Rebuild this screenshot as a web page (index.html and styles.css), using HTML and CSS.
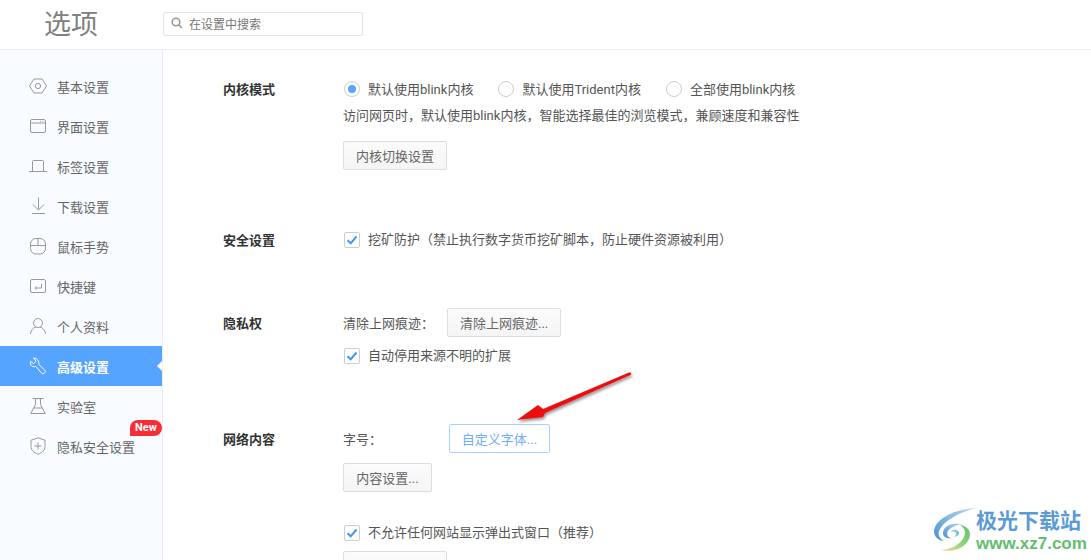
FILE: index.html
```html
<!DOCTYPE html>
<html lang="zh-CN">
<head>
  <meta charset="UTF-8" />
  <title>选项</title>
  <link rel="stylesheet" href="styles.css">
</head>
<body>
<header class="top-bar">
  <h1 class="page-title">选项</h1>
  <div class="search-box">
    <svg class="search-icon" width="12" height="12" viewBox="0 0 12 12"><circle cx="5" cy="5" r="3.8"/><path d="M7.8 7.8 11 11"/></svg>
    <span>在设置中搜索</span>
  </div>
</header>

<div class="page-body">
  <!-- Sidebar -->
  <nav class="side-nav">
    <a class="nav-item"><svg viewBox="0 0 18 18"><path d="M5 2h8l4.500 7-4.500 7H5L.5 9z"/><circle cx="9" cy="9" r="2.600"/></svg>基本设置</a>
    <a class="nav-item"><svg viewBox="0 0 18 18"><rect x="1.500" y="2.500" width="15" height="13" rx="1.500"/><path d="M1.500 6h15M11 4.300h1M13.500 4.300h1"/></svg>界面设置</a>
    <a class="nav-item"><svg viewBox="0 0 18 18"><path d="M0 14.500h18M3.500 14.500V4.500a1 1 0 0 1 1-1h9a1 1 0 0 1 1 1v10"/></svg>标签设置</a>
    <a class="nav-item"><svg viewBox="0 0 18 18"><path d="M9.500 .5v12M3.800 7.500l5.700 5.500L15 7.500M3 16.500h13"/></svg>下载设置</a>
    <a class="nav-item"><svg viewBox="0 0 18 18"><path d="M1.500 7a5.500 5.500 0 0 1 5.500-5.500h4A5.500 5.500 0 0 1 16.500 7v4.500a5.500 5.500 0 0 1-5.500 5.500H7a5.500 5.500 0 0 1-5.500-5.500zM1.500 8.500h15M9 1.500v7"/></svg>鼠标手势</a>
    <a class="nav-item"><svg viewBox="0 0 18 18"><rect x="1.500" y="2.500" width="15" height="13" rx="1.500"/><path d="M12.500 7v4H6M7.500 9.500 6 11l1.500 1.500"/></svg>快捷键</a>
    <a class="nav-item"><svg viewBox="0 0 18 18"><circle cx="9" cy="6" r="4.500"/><path d="M1.500 17c.3-4 3-6.500 5.500-7M16.500 17c-.3-4-3-6.500-5.500-7"/></svg>个人资料</a>
    <a class="nav-item is-active"><svg viewBox="0 0 18 18"><path d="M6.800 1.500 4.500 1 7 4.200 4.700 6.700 1.500 4.300c-.5 2 0 3.700 1.300 4.700 1.300.9 2.800.9 4 .4l5.700 6.600c1 .8 2.300.8 3.200-.1.800-1 .7-2.200-.2-3L9.800 7.500c.5-2.500-.8-5.300-3-6z"/></svg>高级设置</a>
    <a class="nav-item"><svg viewBox="0 0 18 18"><path d="M3.500 1.500h11M6.500 1.500v6L1.800 16.500h14.400L11.500 7.500v-6M4.800 11h8.400"/></svg>实验室</a>
    <a class="nav-item"><svg viewBox="0 0 18 18"><path d="M9 .8 16 3.300v6.200c0 3.700-3 6.300-7 7.700-4-1.400-7-4-7-7.700V3.300zM5.500 9h7M9 5.500v7"/></svg>隐私安全设置<span class="new-badge">New</span></a>
  </nav>

  <!-- Settings -->
  <main class="settings">
    <section class="setting-row setting-row-first">
      <div class="row-label">内核模式</div>
      <div class="row-body">
        <div class="line radio-line">
          <label class="radio-opt"><i class="radio is-on"></i>默认使用blink内核</label>
          <label class="radio-opt"><i class="radio"></i>默认使用Trident内核</label>
          <label class="radio-opt"><i class="radio"></i>全部使用blink内核</label>
        </div>
        <div class="line desc">访问网页时，默认使用blink内核，智能选择最佳的浏览模式，兼顾速度和兼容性</div>
        <div class="btn-line"><button class="btn">内核切换设置</button></div>
      </div>
    </section>

    <section class="setting-row">
      <div class="row-label">安全设置</div>
      <div class="row-body">
        <label class="line"><i class="check"><svg width="14" height="14" viewBox="0 0 14 14"><path d="M2.500 7.200 5.700 10.300 11.500 3.500"/></svg></i>挖矿防护（禁止执行数字货币挖矿脚本，防止硬件资源被利用）</label>
      </div>
    </section>

    <section class="setting-row">
      <div class="row-label row-label-tall">隐私权</div>
      <div class="row-body">
        <div class="inline-line"><span class="inline-name">清除上网痕迹：</span><button class="btn">清除上网痕迹...</button></div>
        <label class="line after-btn"><i class="check"><svg width="14" height="14" viewBox="0 0 14 14"><path d="M2.500 7.200 5.700 10.300 11.500 3.500"/></svg></i>自动停用来源不明的扩展</label>
      </div>
    </section>

    <section class="setting-row">
      <div class="row-label row-label-tall">网络内容</div>
      <div class="row-body">
        <div class="inline-line"><span class="font-name">字号：</span><button class="btn btn-focus">自定义字体...</button></div>
        <div class="btn-line btn-line-near"><button class="btn btn-content">内容设置...</button></div>
        <label class="line popup-line"><i class="check"><svg width="14" height="14" viewBox="0 0 14 14"><path d="M2.500 7.200 5.700 10.300 11.500 3.500"/></svg></i>不允许任何网站显示弹出式窗口（推荐）</label>
        <div class="btn-line btn-line-last"><button class="btn btn-last"></button></div>
      </div>
    </section>
  </main>
</div>

<!-- annotation arrow drawn over the screenshot -->
<svg class="red-arrow" width="140" height="70" viewBox="0 0 140 70">
  <defs>
    <filter id="arrowShadow" x="-20%" y="-40%" width="140%" height="180%"><feDropShadow dx="1" dy="2" stdDeviation="1.600" flood-color="#000" flood-opacity=".45"/></filter>
  </defs>
  <path filter="url(#arrowShadow)" fill="#ec0f0f" d="M5 58 26 43 31 47 117 10.500c2-.5 3 1.500 1.500 2.500L33 51 31 55z"/>
</svg>

<!-- watermark -->
<div class="watermark">
  <svg class="wm-logo" width="44" height="46" viewBox="0 0 44 46">
    <defs>
      <linearGradient id="wmBlue" x1="0" y1="1" x2="1" y2="0"><stop offset="0" stop-color="#4a90d0"/><stop offset="1" stop-color="#bcdcf2"/></linearGradient>
      <linearGradient id="wmGreen" x1="0" y1="1" x2="1" y2="0"><stop offset="0" stop-color="#f0e28a"/><stop offset=".5" stop-color="#8ed27c"/><stop offset="1" stop-color="#5cc46c"/></linearGradient>
    </defs>
    <path fill="url(#wmBlue)" d="M44 1C26 2 8 9 3 20c-3 7 1 13 9 14-5-3-7-7-4-12C13 13 28 5 44 1z"/>
    <path fill="url(#wmBlue)" d="M31 17c-9-2-19 1-20 8-.6 4 3 7 8 6-3-1-4.500-3-3.500-6 1.500-4 8-7 15.500-8z"/>
    <path fill="url(#wmGreen)" d="M9 43c12 3 24-2 28-11 3-7-1-13-9-14 5 3 6 7 4 12-4 8-12 12-23 13z"/>
    <path fill="#7fc3dc" d="M27 25c-2-3-7-3-8 0 1.500-1 4-1 5 1 .6 1.500-.5 3-2 3.500 3 .5 6-2 5-4.500z"/>
  </svg>
  <div class="wm-text">
    <div class="wm-name">极光下载站</div>
    <div class="wm-url">www.xz7.com</div>
  </div>
</div>
</body>
</html>
```

FILE: styles.css
```css
* { box-sizing: border-box; margin: 0; padding: 0; }
html, body { height: 560px; overflow: hidden; }
body {
  background: #fff;
  font-family: Roboto, "Noto Sans CJK SC", sans-serif;
  font-size: 13px;
  color: #555;
}

/* header */
.top-bar {
  height: 50px;
  display: flex;
  align-items: center;
  border-bottom: 1px solid #eee;
}
.page-title {
  width: 163px;
  padding-left: 44px;
  font-size: 27px;
  font-weight: 400;
  line-height: 50px;
  color: #808080;
}
.search-box {
  width: 200px;
  height: 24px;
  margin-top: -1px;
  padding: 0 0 2px 7px;
  display: flex;
  align-items: center;
  gap: 6px;
  border: 1px solid #e3e3e3;
  border-radius: 2px;
  font-size: 12px;
  color: #777;
}
.search-icon { fill: none; stroke: #999; stroke-width: 1.600; }

.page-body { display: flex; height: 510px; }

/* sidebar */
.side-nav {
  width: 163px;
  flex: none;
  padding-top: 16px;
  background: #f8fbff;
  border-right: 1px solid #e8edf6;
}
.nav-item {
  position: relative;
  height: 40px;
  padding-left: 29px;
  display: flex;
  align-items: center;
  gap: 10px;
  color: #666;
}
.nav-item svg {
  width: 18px;
  height: 18px;
  flex: none;
  fill: none;
  stroke: #999;
  stroke-width: 1;
}
.nav-item.is-active {
  background: #55a4ff;
  color: #fff;
  font-weight: 700;
}
.nav-item.is-active svg { stroke: #fff; }
.nav-item.is-active::after {
  content: '';
  position: absolute;
  right: 0;
  top: 15px;
  border: 5px solid transparent;
  border-left: 0;
  border-right-color: #fff;
}
.new-badge {
  position: absolute;
  left: 130px;
  top: -6px;
  width: 32px;
  height: 16px;
  background: #f92e35;
  border-radius: 8px 8px 8px 0;
  color: #fff;
  font-size: 11px;
  font-weight: 700;
  line-height: 16px;
  text-align: center;
}

/* settings */
.settings { flex: 1; padding: 29px 0 0 60px; overflow: hidden; }
.setting-row { display: flex; margin-bottom: 58px; }
.setting-row-first { margin-bottom: 60px; }
.row-label {
  width: 120px;
  flex: none;
  margin-bottom: -1px;
  padding-top: 1px;
  font-weight: 700;
  line-height: 20px;
  color: #333;
}
.row-label-tall { line-height: 30px; }
.row-body { flex: 1; }
.line {
  min-height: 20px;
  display: flex;
  align-items: center;
  gap: 8px;
  line-height: 20px;
}
.radio-line { height: 20px; gap: 24px; }
.radio-opt { display: flex; align-items: center; gap: 8px; padding-top: 2px; }
.radio {
  width: 16px;
  height: 16px;
  margin: 0 0 2px 1px;
  border: 1px solid #ccc;
  border-radius: 50%;
  background: #fff;
  position: relative;
}
.radio.is-on::after {
  content: '';
  position: absolute;
  left: 3px;
  top: 3px;
  width: 8px;
  height: 8px;
  border-radius: 50%;
  background: #55a4ff;
}
.check {
  width: 16px;
  height: 16px;
  margin-left: 1px;
  border: 1px solid #ccc;
  border-radius: 2px;
  display: flex;
  align-items: center;
  justify-content: center;
}
.check svg { fill: none; stroke: #3f96f5; stroke-width: 2; }
.desc { margin-top: 6px; padding-top: 1px; }
.btn-line { margin-top: 15px; display: flex; }
.btn-line-near { margin-top: 10px; }
.btn-line-last { margin-top: 8px; }
.btn {
  height: 29px;
  padding: 0 12px;
  border: 1px solid #ddd;
  border-radius: 2px;
  background: linear-gradient(#fbfbfb, #f5f5f5);
  font: inherit;
  color: #666;
}
.btn-focus {
  width: 101px;
  padding: 0;
  background: #fff;
  border-color: #a9d0ff;
  color: #70aef5;
}
.btn-content { width: 89px; padding: 0; }
.btn-last { width: 104px; padding: 0; }
.inline-line { display: flex; align-items: center; }
.inline-name { width: 104px; }
.font-name { width: 106px; }
.after-btn { margin-top: 9px; }
.popup-line { margin-top: 31px; }

/* overlays */
.red-arrow { position: absolute; left: 512px; top: 362px; }
.watermark {
  position: absolute;
  left: 932px;
  top: 507px;
  display: flex;
}
.wm-text { padding-top: 2px; }
.wm-name {
  font-size: 21px;
  font-weight: 700;
  line-height: 25px;
  color: #5b9bd5;
  white-space: nowrap;
}
.wm-url {
  font-family: "Liberation Sans", sans-serif;
  font-size: 17px;
  font-weight: 700;
  line-height: 20px;
  color: #62bd6e;
}
```
